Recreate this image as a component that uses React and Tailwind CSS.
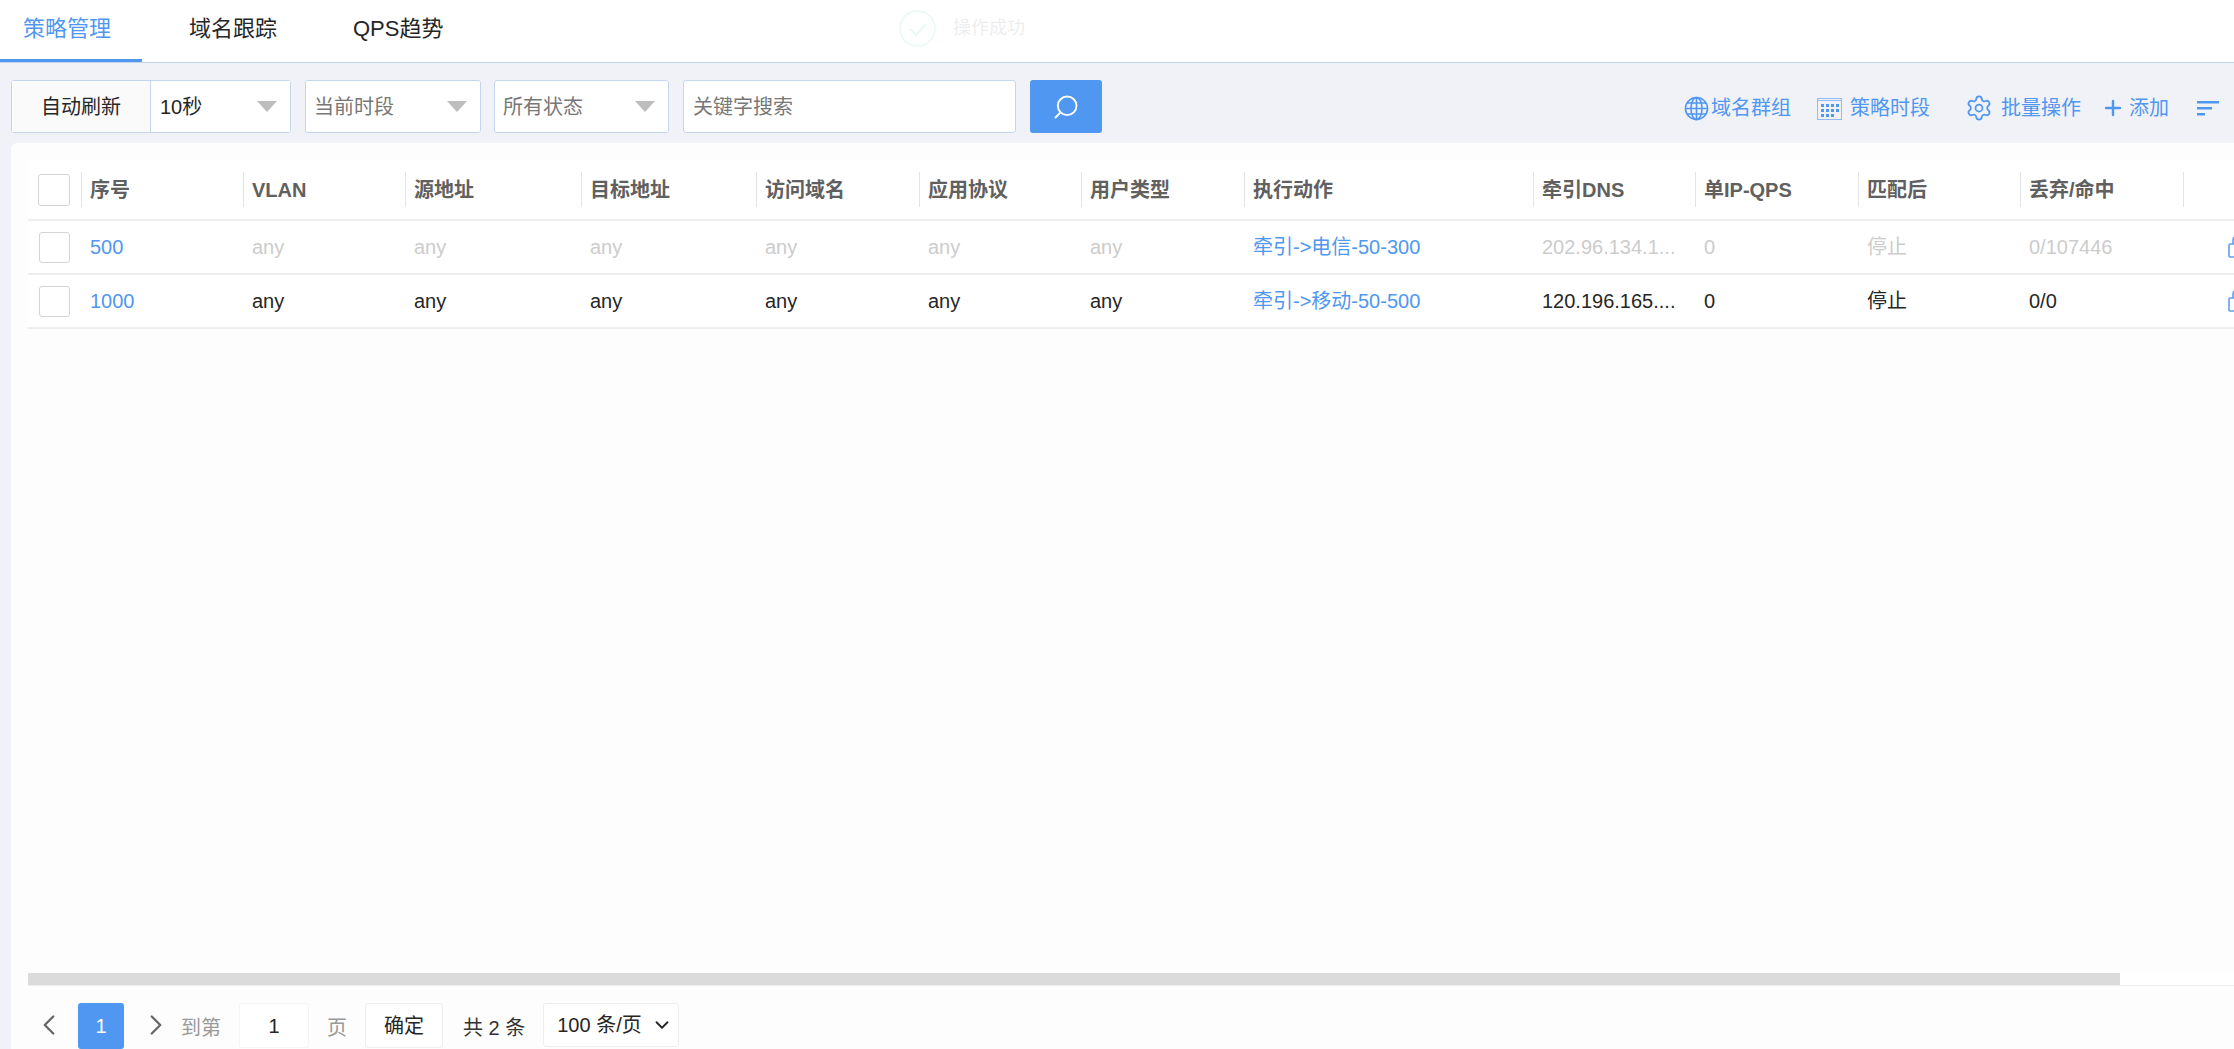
import { Search, Plus, ChevronLeft, ChevronRight, ChevronDown, Settings } from 'lucide-react';

const columns = [
  { name: '序号', width: 162 },
  { name: 'VLAN', width: 162 },
  { name: '源地址', width: 176 },
  { name: '目标地址', width: 175 },
  { name: '访问域名', width: 163 },
  { name: '应用协议', width: 162 },
  { name: '用户类型', width: 163 },
  { name: '执行动作', width: 289 },
  { name: '牵引DNS', width: 162 },
  { name: '单IP-QPS', width: 163 },
  { name: '匹配后', width: 162 },
  { name: '丢弃/命中', width: 163 },
  { name: '', width: 100 },
];

const rows = [
  {
    id: '500',
    action: '牵引->电信-50-300',
    dns: '202.96.134.1...',
    drop: '0/107446',
    textClass: 'text-[#cccccc]',
  },
  {
    id: '1000',
    action: '牵引->移动-50-500',
    dns: '120.196.165....',
    drop: '0/0',
    textClass: 'text-[#262626]',
  },
];

const Triangle = () => (
  <svg width="20" height="11" viewBox="0 0 20 11" className="shrink-0">
    <path d="M0 0h20L10 11z" fill="#bdbdbd" />
  </svg>
);

const SelectBox = ({ label, className, textClass }) => (
  <div className={`flex h-full items-center justify-between bg-white pl-[8px] pr-[13px] ${className}`}>
    <span className={textClass}>{label}</span>
    <Triangle />
  </div>
);

const GlobeIcon = () => (
  <svg width="25" height="25" viewBox="0 0 25 25" fill="none" stroke="#4f97f0" strokeWidth="1.6">
    <circle cx="12.5" cy="12.5" r="11" />
    <ellipse cx="12.5" cy="12.5" rx="5.5" ry="11" />
    <path d="M12.5 1.5v22M1.5 12.5h22M3 7h19M3 18h19" />
  </svg>
);

const CalendarIcon = () => (
  <svg width="25" height="23" viewBox="0 0 25 23" fill="none">
    <rect x="0.5" y="1.5" width="24" height="21" stroke="#8fbcf5" />
    <path d="M0.5 3.5h24" stroke="#8fbcf5" />
    <g fill="#4f97f0">
      <rect x="4" y="7" width="3" height="3" />
      <rect x="9" y="7" width="3" height="3" />
      <rect x="14" y="7" width="3" height="3" />
      <rect x="19" y="7" width="3" height="3" />
      <rect x="4" y="12" width="3" height="3" />
      <rect x="9" y="12" width="3" height="3" />
      <rect x="14" y="12" width="3" height="3" />
      <rect x="19" y="12" width="3" height="3" />
      <rect x="4" y="17" width="3" height="3" />
      <rect x="9" y="17" width="3" height="3" />
      <rect x="14" y="17" width="3" height="3" />
    </g>
  </svg>
);

const SortIcon = () => (
  <svg width="22" height="15" viewBox="0 0 22 15" fill="#4f97f0">
    <rect x="0" y="0" width="22" height="2.5" />
    <rect x="0" y="6" width="15" height="2.5" />
    <rect x="0" y="12" width="8" height="2.5" />
  </svg>
);

const LockIcon = () => (
  <svg width="22" height="24" viewBox="0 0 22 24" fill="none" stroke="#5f9ff2" strokeWidth="1.6" className="shrink-0">
    <path d="M5 9V5a4 4 0 0 1 8 0v4" />
    <rect x="1" y="9" width="18" height="13" rx="1" />
    <path d="M7 9v13M13 9v13" />
  </svg>
);

const Checkbox = ({ className }) => (
  <div className={`rounded-[3px] border border-[#d4d4d4] bg-white ${className}`} />
);

const App = () => {
  return (
    <div className="flex h-[1049px] w-[2234px] flex-col overflow-hidden bg-[#f0f2f7] font-['Liberation_Sans','Noto_Sans_CJK_SC',sans-serif] text-[20px] text-[#262626]">
      {/* Tabs */}
      <div className="relative flex h-[63px] shrink-0 items-start border-b border-[#c3d6ee] bg-white text-[22px]">
        <div className="h-[62px] w-[142px] border-b-[3px] border-[#4f97f0] pl-[23px] pt-[12px] text-[#4f97f0]">策略管理</div>
        <div className="ml-[47px] w-[164px] pt-[12px]">域名跟踪</div>
        <div className="pt-[12px]">QPS趋势</div>

        {/* Toast fading out */}
        <div className="absolute left-[899px] top-[10px] flex items-center gap-[17px] opacity-10">
          <svg width="37" height="37" viewBox="0 0 37 37" fill="none" stroke="#3cc8a0" strokeWidth="1.5">
            <circle cx="18.5" cy="18.5" r="17.5" />
            <path d="M11 19l6 6 10-11" strokeWidth="2" />
          </svg>
          <span className="text-[18px] text-[#555555]">操作成功</span>
        </div>
      </div>

      {/* Toolbar */}
      <div className="flex h-[80px] shrink-0 pl-[11px] pt-[17px]">
        <div className="flex h-[53px] w-[280px] rounded-[3px] border border-[#c3d6ee]">
          <div className="flex w-[139px] items-center justify-center border-r border-[#c3d6ee] bg-[#fafafa]">自动刷新</div>
          <SelectBox label="10秒" className="flex-1 pl-[9px]" textClass="text-[#262626]" />
        </div>
        <div className="ml-[14px] h-[53px] w-[176px] overflow-hidden rounded-[3px] border border-[#c3d6ee]">
          <SelectBox label="当前时段" textClass="text-[#777777]" />
        </div>
        <div className="ml-[13px] h-[53px] w-[175px] overflow-hidden rounded-[3px] border border-[#c3d6ee]">
          <SelectBox label="所有状态" textClass="text-[#777777]" />
        </div>
        <div className="ml-[14px] flex h-[53px] w-[333px] items-center rounded-[3px] border border-[#c3d6ee] bg-white pl-[9px] text-[#777777]">
          关键字搜索
        </div>
        <div className="ml-[14px] flex h-[53px] w-[72px] items-center justify-center rounded-[3px] bg-[#4f97f0]">
          <Search size={28} color="#ffffff" strokeWidth={1.6} className="-scale-x-100" />
        </div>

        <div className="ml-auto flex h-[53px] items-center pr-[15px] pt-[3px] text-[#4f97f0]">
          <GlobeIcon />
          <span className="ml-[2px]">域名群组</span>
          <span className="ml-[26px]"><CalendarIcon /></span>
          <span className="ml-[8px]">策略时段</span>
          <Settings size={28} strokeWidth={1.5} className="ml-[35px]" />
          <span className="ml-[8px]">批量操作</span>
          <Plus size={24} strokeWidth={2.4} className="ml-[20px]" />
          <span className="ml-[4px]">添加</span>
          <span className="ml-[28px]"><SortIcon /></span>
        </div>
      </div>

      {/* Card */}
      <div className="ml-[11px] flex min-h-0 flex-1 flex-col rounded-tl-[6px] bg-[#fdfdfd] pl-[17px] pt-[17px]">
        <div className="min-h-0 flex-1 overflow-hidden">
          <table className="w-[2230px] table-fixed border-collapse bg-white">
            <colgroup>
              <col className="w-[53px]" />
              {columns.map((col) => (
                <col key={col.name} style={{ width: col.width }} />
              ))}
            </colgroup>
            <thead>
              <tr className="h-[60px] border-b-2 border-[#eeeeee] text-left font-bold text-[#606060]">
                <th className="pl-[10px] align-middle">
                  <Checkbox className="h-[32px] w-[32px]" />
                </th>
                {columns.map((col) => (
                  <th key={col.name} className="p-0 font-bold">
                    <div className="flex h-[35px] items-center border-l border-[#e4e4e4] pl-[8px]">{col.name}</div>
                  </th>
                ))}
              </tr>
            </thead>
            <tbody>
              {rows.map((row) => (
                <tr key={row.id} className={`h-[54px] border-b-2 border-[#eeeeee] ${row.textClass}`}>
                  <td className="pl-[11px]">
                    <Checkbox className="h-[31px] w-[31px]" />
                  </td>
                  <td className="pl-[9px] text-[#4f97f0]">{row.id}</td>
                  <td className="pl-[9px]">any</td>
                  <td className="pl-[9px]">any</td>
                  <td className="pl-[9px]">any</td>
                  <td className="pl-[9px]">any</td>
                  <td className="pl-[9px]">any</td>
                  <td className="pl-[9px]">any</td>
                  <td className="pl-[9px] text-[#4f97f0]">{row.action}</td>
                  <td className="truncate pl-[9px]">{row.dns}</td>
                  <td className="pl-[9px]">0</td>
                  <td className="pl-[9px]">停止</td>
                  <td className="pl-[9px]">{row.drop}</td>
                  <td className="pl-[45px]"><LockIcon /></td>
                </tr>
              ))}
            </tbody>
          </table>
        </div>

        {/* Horizontal scrollbar */}
        <div className="h-[13px] shrink-0 border-b border-[#eeeeee] bg-white">
          <div className="h-[12px] w-[2092px] bg-[#dbdbdb]" />
        </div>

        {/* Pagination */}
        <div className="flex h-[63px] shrink-0 items-start pt-[17px]">
          <ChevronLeft size={34} strokeWidth={1.6} color="#666666" className="ml-[4px] mt-[5px]" />
          <div className="ml-[12px] flex h-[46px] w-[46px] items-center justify-center rounded-[3px] bg-[#4f97f0] text-white">1</div>
          <ChevronRight size={34} strokeWidth={1.6} color="#666666" className="ml-[15px] mt-[5px]" />
          <span className="ml-[8px] mt-[10px] text-[#999999]">到第</span>
          <div className="ml-[18px] flex h-[45px] w-[70px] items-center justify-center rounded-[3px] border border-[#f5f5f5] bg-white">1</div>
          <span className="ml-[18px] mt-[10px] text-[#999999]">页</span>
          <div className="ml-[18px] flex h-[45px] w-[78px] items-center justify-center rounded-[3px] border border-[#eeeeee] bg-white">确定</div>
          <span className="ml-[20px] mt-[10px] text-[#333333]">共 2 条</span>
          <div className="ml-[18px] flex h-[44px] w-[136px] items-center justify-between rounded-[3px] border border-[#eeeeee] bg-white pl-[13px] pr-[5px]">
            <span>100 条/页</span>
            <ChevronDown size={22} strokeWidth={2} />
          </div>
        </div>
      </div>
    </div>
  );
};

export default App;
